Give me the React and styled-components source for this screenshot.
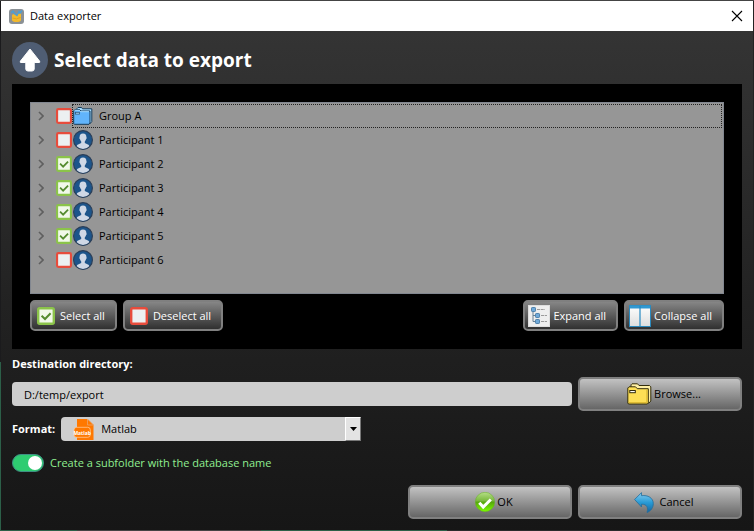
import React, { useState } from "react";
import styled, { createGlobalStyle } from "styled-components";

const GlobalStyle = createGlobalStyle`
  * { box-sizing: border-box; }
  body { margin: 0; background: #1a1a1a; }
  body, button, input, select {
    font-family: "Open Sans", "Noto Sans", sans-serif;
    font-size: 11px;
    line-height: 16px;
  }
`;

const Frame = styled.div`
  min-height: 100vh;
  display: flex;
  flex-direction: column;
  padding: 1px;
  background:
    linear-gradient(#444, #444) top / 100% 1px no-repeat,
    linear-gradient(90deg, #2c5f48 77px, #444 77px 261px, #2c5f48 261px 447px, #2b2b2b 447px) bottom / 100% 1px no-repeat,
    linear-gradient(#1b1b1d 362px, #2c5f48 362px) left / 1px 100% no-repeat,
    #222;
`;

const TitleBar = styled.header`
  display: flex;
  align-items: center;
  gap: 6px;
  height: 30px;
  padding: 0 8px;
  background: #fff;
  color: #000;
`;

const TitleText = styled.span`
  flex: 1;
`;

const CloseButton = styled.button`
  display: flex;
  padding: 2px;
  border: 0;
  background: none;
`;

const Content = styled.main`
  flex: 1;
  display: flex;
  flex-direction: column;
  padding: 11px;
  background: linear-gradient(#343434, #222 55%, #161616);
  color: #fff;
`;

const Heading = styled.h1`
  display: flex;
  align-items: center;
  gap: 6px;
  margin: 0 0 6px;
  font-size: 19px;
  line-height: 36px;
`;

const Panel = styled.section`
  flex: 1;
  display: flex;
  flex-direction: column;
  gap: 6px;
  padding: 18px;
  background: #000;
`;

const Tree = styled.ul`
  flex: 1;
  margin: 0;
  padding: 1px;
  list-style: none;
  border: 1px solid #828790;
  background: #969696;
  color: #000;
`;

const TreeRow = styled.li`
  display: flex;
  align-items: center;
  height: 24px;
`;

const Expander = styled.button`
  display: flex;
  justify-content: center;
  width: 18px;
  margin-right: 6px;
  padding: 0;
  border: 0;
  background: none;
`;

const TickHolder = styled.span`
  display: grid;
  width: 16px;
  height: 16px;
  > * { grid-area: 1 / 1; }
  > svg { pointer-events: none; }
`;

const Tick = styled.input`
  appearance: none;
  width: 16px;
  height: 16px;
  margin: 0;
`;

const NodeLabel = styled.label`
  flex: 1;
  display: flex;
  align-items: center;
  gap: 6px;
  height: 24px;
  border: 1px dotted ${(p) => (p.$focused ? "#222" : "transparent")};
`;

const Toolbar = styled.div`
  display: flex;
  gap: 6px;
`;

const Spacer = styled.div`
  flex: 1;
`;

const ToolButton = styled.button`
  display: flex;
  align-items: center;
  gap: ${(p) => p.$gap}px;
  height: 31px;
  padding: 0 10px 0 ${(p) => p.$start}px;
  border: 2px solid #808080;
  border-radius: 5px;
  background: linear-gradient(#868686, #303030);
  color: #fff;
  white-space: nowrap;
`;

const ActionButton = styled.button`
  display: flex;
  align-items: center;
  justify-content: center;
  gap: ${(p) => p.$gap}px;
  width: 164px;
  height: 34px;
  padding: 0 6px 0 14px;
  border: 2px solid #808080;
  border-radius: 5px;
  background: linear-gradient(#c2c2c2, #666);
  color: #000;
`;

const FieldLabel = styled.label`
  font-weight: 700;
`;

const DirectoryLabel = styled(FieldLabel)`
  margin: 7px 0 5px;
`;

const FieldRow = styled.div`
  display: flex;
  align-items: center;
  gap: 6px;
  margin-bottom: 6px;
`;

const PathInput = styled.input`
  flex: 1;
  min-width: 0;
  height: 24px;
  padding: 0 12px;
  border: 0;
  border-radius: 4px;
  background: #cecece;
  color: #000;
`;

const SelectBox = styled.div`
  display: grid;
  grid-template-columns: 12px 22px 1fr 16px;
  align-items: center;
  width: 300px;
  height: 24px;
  border-radius: 4px 0 0 4px;
  background: #cecece;
  > svg, > span { grid-row: 1; pointer-events: none; z-index: 1; }
  > svg { grid-column: 2; }
`;

const FormatSelect = styled.select`
  grid-area: 1 / 1 / 2 / 5;
  appearance: none;
  height: 24px;
  padding: 0 20px 0 40px;
  border: 0;
  background: none;
  color: #000;
`;

const DropArrow = styled.span`
  grid-column: 4;
  display: flex;
  align-items: center;
  justify-content: center;
  height: 24px;
  border: 1px solid;
  border-color: #fff #777 #777 #fff;
  background: #e3e3e3;
`;

const SwitchRow = styled.div`
  display: flex;
  align-items: center;
  gap: 6px;
  margin: 7px 0 13px;
  color: #90ee90;
`;

const Switch = styled.input`
  appearance: none;
  display: flex;
  justify-content: flex-start;
  width: 32px;
  height: 18px;
  margin: 0;
  padding: 1px;
  border: 1px solid #3e8f83;
  border-radius: 9px;
  background: #777;
  &::before {
    content: "";
    width: 14px;
    height: 14px;
    border-radius: 50%;
    background: #fff;
  }
  &:checked {
    justify-content: flex-end;
    background: #2ecc71;
  }
`;

const Footer = styled.footer`
  display: flex;
  justify-content: flex-end;
  gap: 6px;
`;

function AppIcon() {
  return (
    <svg width="15" height="15" viewBox="0 0 15 15">
      <rect width="15" height="15" rx="3" fill="#8b9196" />
      <path d="M3 6.5C3 5.5 4.5 5 6 5.5L7.5 6.5 9 4.5 12 4.5V11C12 12.5 10 13 7.5 13S3 12.5 3 11Z" fill="#f2b92d" />
      <path d="M2 4L4 2 6 5 8 6.5 10 2.5 11 4 13 1.5" fill="none" stroke="#4a9fd8" strokeWidth="1.4" />
      <path d="M3.5 9Q7.5 11 11.5 8.5" fill="none" stroke="#d99a1d" strokeWidth=".7" />
    </svg>
  );
}

function UpIcon() {
  return (
    <svg width="36" height="36" viewBox="0 0 36 36">
      <circle cx="18" cy="18" r="18" fill="#4f5d73" />
      <path d="M18 7L27.5 19Q28.5 20.5 27 20.5H22.2V27Q22.2 29 20 29H16Q13.8 29 13.8 27V20.5H9Q7.5 20.5 8.5 19Z" fill="#fff" stroke="#fff" strokeLinejoin="round" />
    </svg>
  );
}

function TickIcon({ checked, size }) {
  return (
    <svg width={size} height={size} viewBox="0 0 18 18">
      <rect x="1.2" y="1.2" width="15.6" height="15.6" rx="1.5" fill={checked ? "#f1f8e9" : "#ecf0f1"} stroke={checked ? "#8bc34a" : "#e74c3c"} strokeWidth="2.4" />
      {checked && <path d="M4.6 8.7L8 12 13.6 6.3" fill="none" stroke="#558b2f" strokeWidth="2" />}
    </svg>
  );
}

function PersonIcon() {
  return (
    <svg width="20" height="20" viewBox="0 0 20 20">
      <circle cx="10" cy="10" r="9.4" fill="#1d558b" stroke="#2c3f58" strokeWidth="1.2" />
      <path d="M10 3.4C12.4 3.4 13.5 5 13.4 7.2 13.9 7.5 13.7 8.7 13.1 9 12.8 10.3 12.2 11 11.8 11.5V13L15.4 14.7C16 15 16.2 16 16.2 16.3Q13.7 19 10 19T3.8 16.3C3.8 16 4 15 4.6 14.7L8.2 13V11.5C7.8 11 7.2 10.3 6.9 9 6.3 8.7 6.1 7.5 6.6 7.2 6.5 5 7.6 3.4 10 3.4Z" fill="#cfd8e6" />
    </svg>
  );
}

function BlueFolderIcon() {
  return (
    <svg width="20" height="20" viewBox="0 0 20 20">
      <path d="M4 4V2.6L5 1.5H8.5L9.5 2.8H18.8V15.5L17 17.8" fill="#a5dcff" stroke="#173b58" />
      <path d="M.7 17.8V5L2 3.5H6.5L8 5H17V17L16 18.3H1.5Z" fill="#61b4fb" stroke="#173b58" />
      <path d="M1.5 4.8L2.2 4.2H6.2L7.8 5.7H16" fill="none" stroke="#a5dcff" />
      <rect x="2.4" y="6.3" width="4" height="1.8" fill="#a5dcff" stroke="#31597a" strokeWidth=".8" />
    </svg>
  );
}

function YellowFolderIcon() {
  return (
    <svg width="25" height="22" viewBox="0 0 25 22">
      <path d="M4 5V1.8L5 .8H10.5L12 2.5H22.5L23.8 3.8V18L21.5 20.5" fill="#fff0a5" stroke="#332d0c" />
      <path d="M.8 20V5L2 3.8H8.5L10.3 5.7H21.3V20L20.3 21H1.5Z" fill="#fddf55" stroke="#332d0c" />
      <path d="M19.8 6.8V19.6H2" fill="none" stroke="#dcb82f" />
      <rect x="2.8" y="7.5" width="5.5" height="2.2" fill="#fff" stroke="#332d0c" />
    </svg>
  );
}

function ExpandIcon() {
  return (
    <svg width="22" height="22" viewBox="0 0 22 22">
      <rect x=".5" y=".5" width="21" height="21" fill="#eee" stroke="#ddd" />
      <path d="M5 6V16.5H8M5 10.5H8" fill="none" stroke="#647f94" />
      <g fill="#6fa9d9" stroke="#4f81ab">
        <rect x="3.5" y="2.5" width="4" height="4" rx=".7" />
        <rect x="7.5" y="8.5" width="4" height="4" rx=".7" />
        <rect x="7.5" y="14.5" width="4" height="4" rx=".7" />
      </g>
      <path d="M9 4.5H17M13 10.5H19M13 16.5H19" stroke="#9b9b9b" strokeDasharray="3 .7" />
    </svg>
  );
}

function CollapseIcon() {
  return (
    <svg width="22" height="22" viewBox="0 0 22 22">
      <defs>
        <linearGradient id="pane" x2="0" y2="1">
          <stop stopColor="#fff" />
          <stop offset="1" stopColor="#ddd" />
        </linearGradient>
      </defs>
      <rect x=".5" y=".5" width="21" height="21" fill="url(#pane)" stroke="#2b89bd" />
      <path d="M1 2H21" stroke="#3298d1" strokeWidth="3" />
      <path d="M11 1V21" stroke="#2589c1" strokeWidth="1.2" />
    </svg>
  );
}

function MatlabIcon() {
  return (
    <svg width="22" height="22" viewBox="0 0 22 22">
      <path d="M4 1H14L20.5 7V22H4Z" fill="#ff7800" />
      <path d="M14.5 1L20.5 7H14.5Z" fill="#ff7800" stroke="#e9a66e" strokeWidth=".8" />
      <rect x="1" y="9.3" width="16.3" height="10" rx="2.6" fill="#ff7800" stroke="#ffd2a8" strokeWidth=".7" />
      <text x="9.2" y="16.5" textAnchor="middle" fontFamily="Open Sans, sans-serif" fontSize="5" fontWeight="700" fill="#fff">Matlab</text>
    </svg>
  );
}

function OkIcon() {
  return (
    <svg width="20" height="20" viewBox="0 0 20 20">
      <defs>
        <linearGradient id="okFill" x2="0" y2="1">
          <stop stopColor="#b5de86" />
          <stop offset=".45" stopColor="#78b83b" />
          <stop offset=".5" stopColor="#55a50d" />
          <stop offset="1" stopColor="#7dff00" />
        </linearGradient>
      </defs>
      <circle cx="10" cy="10" r="9.7" fill="url(#okFill)" stroke="#62b51c" strokeWidth=".5" />
      <path d="M4.3 10.8L8.2 15 15.8 7.5" fill="none" stroke="#fff" strokeWidth="3" />
    </svg>
  );
}

function UndoIcon() {
  return (
    <svg width="20" height="21" viewBox="0 0 20 21">
      <defs>
        <linearGradient id="undoFill" x2="0" y2="1">
          <stop stopColor="#86cdf0" />
          <stop offset=".5" stopColor="#299bd5" />
          <stop offset="1" stopColor="#1465a0" />
        </linearGradient>
      </defs>
      <path d="M.6 7.5L7.5 .6V3.7C14 2.8 19.2 6 19.3 11.5 19.3 15.5 17 19 13 20.5 14.3 16 13.3 12.1 7.5 12.2V15Z" fill="url(#undoFill)" stroke="#236d9c" strokeWidth=".8" />
    </svg>
  );
}

const initialNodes = [
  { name: "Group A", group: true, checked: false },
  { name: "Participant 1", checked: false },
  { name: "Participant 2", checked: true },
  { name: "Participant 3", checked: true },
  { name: "Participant 4", checked: true },
  { name: "Participant 5", checked: true },
  { name: "Participant 6", checked: false },
];

export default function App() {
  const [nodes, setNodes] = useState(initialNodes);
  const toggle = (index) =>
    setNodes(nodes.map((n, i) => (i === index ? { ...n, checked: !n.checked } : n)));
  const setAll = (checked) => setNodes(nodes.map((n) => ({ ...n, checked })));

  return (
    <Frame>
      <GlobalStyle />
      <TitleBar>
        <AppIcon />
        <TitleText>Data exporter</TitleText>
        <CloseButton aria-label="Close">
          <svg width="12" height="12" viewBox="0 0 12 12">
            <path d="M1 1L11 11M11 1L1 11" stroke="#000" strokeWidth="1.1" />
          </svg>
        </CloseButton>
      </TitleBar>
      <Content>
        <Heading>
          <UpIcon />
          Select data to export
        </Heading>
        <Panel>
          <Tree>
            {nodes.map((node, i) => (
              <TreeRow key={node.name}>
                <Expander aria-label={`Expand ${node.name}`}>
                  <svg width="6" height="10" viewBox="0 0 6 10">
                    <path d="M1 1L5 5 1 9" fill="none" stroke="#5f5f5f" strokeWidth="1.6" />
                  </svg>
                </Expander>
                <TickHolder>
                  <Tick type="checkbox" id={`node-${i}`} checked={node.checked} onChange={() => toggle(i)} />
                  <TickIcon checked={node.checked} size={16} />
                </TickHolder>
                <NodeLabel htmlFor={`node-${i}`} $focused={node.group}>
                  {node.group ? <BlueFolderIcon /> : <PersonIcon />}
                  {node.name}
                </NodeLabel>
              </TreeRow>
            ))}
          </Tree>
          <Toolbar>
            <ToolButton $start={5} $gap={5} onClick={() => setAll(true)}>
              <TickIcon checked size={18} />
              Select all
            </ToolButton>
            <ToolButton $start={5} $gap={5} onClick={() => setAll(false)}>
              <TickIcon size={18} />
              Deselect all
            </ToolButton>
            <Spacer />
            <ToolButton $start={3} $gap={3}>
              <ExpandIcon />
              Expand all
            </ToolButton>
            <ToolButton $start={3} $gap={3}>
              <CollapseIcon />
              Collapse all
            </ToolButton>
          </Toolbar>
        </Panel>
        <DirectoryLabel htmlFor="directory">Destination directory:</DirectoryLabel>
        <FieldRow>
          <PathInput id="directory" type="text" defaultValue="D:/temp/export" />
          <ActionButton $gap={2}>
            <YellowFolderIcon />
            Browse...
          </ActionButton>
        </FieldRow>
        <FieldRow>
          <FieldLabel htmlFor="format">Format:</FieldLabel>
          <SelectBox>
            <FormatSelect id="format">
              <option>Matlab</option>
            </FormatSelect>
            <MatlabIcon />
            <DropArrow>
              <svg width="7" height="4" viewBox="0 0 7 4">
                <path d="M0 0H7L3.5 4Z" />
              </svg>
            </DropArrow>
          </SelectBox>
        </FieldRow>
        <SwitchRow>
          <Switch type="checkbox" id="subfolder" defaultChecked />
          <label htmlFor="subfolder">Create a subfolder with the database name</label>
        </SwitchRow>
        <Footer>
          <ActionButton $gap={2}>
            <OkIcon />
            OK
          </ActionButton>
          <ActionButton $gap={5}>
            <UndoIcon />
            Cancel
          </ActionButton>
        </Footer>
      </Content>
    </Frame>
  );
}
